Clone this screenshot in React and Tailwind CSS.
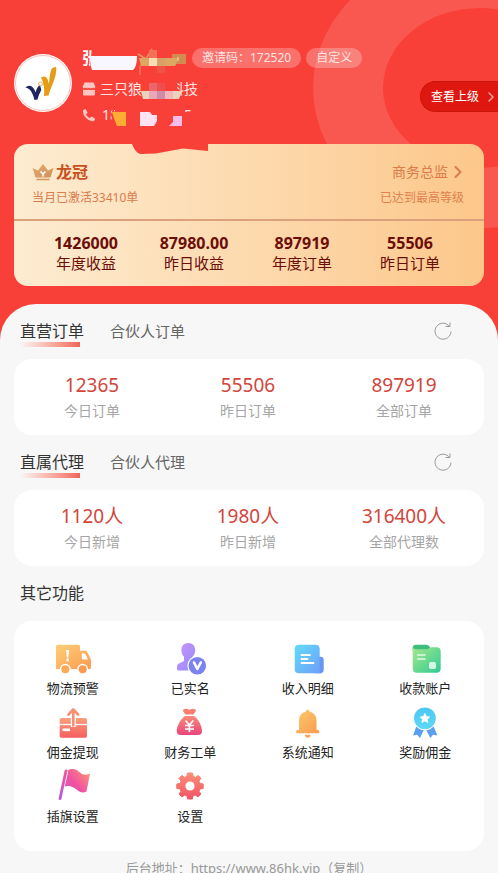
import React, { useState } from "react";
import { ChevronRight } from "lucide-react";

const summary = [
  { value: "1426000", label: "年度收益" },
  { value: "87980.00", label: "昨日收益" },
  { value: "897919", label: "年度订单" },
  { value: "55506", label: "昨日订单" },
];

const orders = [
  { value: "12365", label: "今日订单" },
  { value: "55506", label: "昨日订单" },
  { value: "897919", label: "全部订单" },
];

const agents = [
  { value: "1120人", label: "今日新增" },
  { value: "1980人", label: "昨日新增" },
  { value: "316400人", label: "全部代理数" },
];

// 渐变定义
const Gradient = ({ id, from, to }) => (
  <defs>
    <linearGradient id={id} x1="0" y1="0" x2="1" y2="1">
      <stop offset="0" stopColor={from} />
      <stop offset="1" stopColor={to} />
    </linearGradient>
  </defs>
);

const TruckIcon = () => (
  <svg viewBox="0 0 36 36" className="h-9 w-9">
    <Gradient id="truck" from="#fcd078" to="#fb9a50" />
    <path
      d="M2.500 3.700H23.500Q25 3.700 25 5.500V28H1V5.500Q1 3.700 2.500 3.700ZM25 9.700H30Q31.500 9.700 32.200 11L35.500 17.500Q36 18.500 36 19.500V26.500Q36 28 34.500 28H25Z"
      fill="url(#truck)"
    />
    <path d="M26.800 12.500H29.200Q30 12.500 30.500 13.400L33 18.500H28.500Q26.800 18.500 26.800 17Z" fill="#fff" />
    <circle cx="10.300" cy="28.300" r="5.500" fill="#fff" />
    <circle cx="27.700" cy="28.300" r="5.500" fill="#fff" />
    <circle cx="10.300" cy="28.300" r="4" fill="#fcaa58" />
    <circle cx="27.700" cy="28.300" r="4" fill="#fb9a50" />
    <path d="M11.200 9H14L13.400 16.500H11.800Z" fill="#fff" />
    <circle cx="12.600" cy="19" r="1.400" fill="#fff" />
  </svg>
);

const VerifiedIcon = () => (
  <svg viewBox="0 0 36 36" className="h-9 w-9">
    <Gradient id="person" from="#cf93fb" to="#8a8cf8" />
    <path
      d="M16.300 2C20.800 2 23.200 5 23.200 9C23.200 12 22.300 14 20.500 15.800V19.500L26 23V29.500H6.500Q5 29.500 5 28V25.500Q5 23.500 7 22.500L12 20V15.800C10.200 14 9.400 12 9.400 9C9.400 5 11.800 2 16.300 2Z"
      fill="url(#person)"
    />
    <circle cx="25.300" cy="24.700" r="10" fill="#fff" />
    <circle cx="25.300" cy="24.700" r="8.800" fill="#7a83ee" />
    <path d="M22 21.500L25.300 28L28.800 21.500" fill="none" stroke="#fff" strokeWidth="2.600" strokeLinecap="round" strokeLinejoin="round" />
  </svg>
);

const DetailIcon = () => (
  <svg viewBox="0 0 36 36" className="h-9 w-9">
    <Gradient id="doc" from="#62dcf8" to="#6f9cfb" />
    <path d="M28 15.700H31Q33.700 16 33.700 19V28.500Q33.700 32.300 30 32.300H24Z" fill="#6695f2" />
    <path d="M9 3.700H25.500Q29.700 3.700 29.700 8V28Q29.700 32.300 32 32.300H9Q4.700 32.300 4.700 28V8Q4.700 3.700 9 3.700Z" fill="url(#doc)" />
    <path d="M11.500 14H20M11.500 18H17.500M11.500 22H23.500" stroke="#fff" strokeWidth="1.800" strokeLinecap="round" />
  </svg>
);

const AccountIcon = () => (
  <svg viewBox="0 0 36 36" className="h-9 w-9">
    <Gradient id="folder" from="#a6e88c" to="#2fcb94" />
    <path d="M9 3.700H19Q22 3.700 23 6.500L24 10H5.700V7Q5.700 3.700 9 3.700Z" fill="#3dbd7e" />
    <path d="M5.700 6Q6.500 8.300 9 8.300H18Q21 8.300 22.500 7Q23.500 6.300 25 6.300H29.500Q33.700 6.300 33.700 10.500V27.500Q33.700 31.700 29.500 31.700H10Q5.700 31.700 5.700 27.500Z" fill="url(#folder)" />
    <path d="M10.500 14H18M10.500 18H18" stroke="#fff" strokeOpacity="0.800" strokeWidth="1.500" strokeLinecap="round" />
    <rect x="22" y="21" width="7" height="7" rx="1.800" fill="#d5f7e6" />
  </svg>
);

const WithdrawIcon = () => (
  <svg viewBox="0 0 36 36" className="h-9 w-9">
    <defs>
      <linearGradient id="box" x1="0" y1="0" x2="0" y2="1">
        <stop offset="0" stopColor="#fba07c" />
        <stop offset="1" stopColor="#f65c5e" />
      </linearGradient>
    </defs>
    <path d="M6.500 13H30.500Q32 13 32 14.500V31Q32 32.700 30.500 32.700H6.500Q4.700 32.700 4.700 31V14.500Q4.700 13 6.500 13Z" fill="url(#box)" />
    <path d="M4.700 19.500H32" stroke="#fff" strokeWidth="1.300" />
    <path d="M18.300 22V5M13 10L18.300 4.500L23.600 10" fill="none" stroke="#fff" strokeWidth="5" />
    <path d="M18.300 20.500V5M13.500 9.500L18.300 4.500L23.100 9.500" fill="none" stroke="#f98f72" strokeWidth="2.600" strokeLinecap="round" strokeLinejoin="round" />
    <rect x="7.500" y="23.500" width="7.500" height="2.600" fill="#fff" />
  </svg>
);

const MoneyBagIcon = () => (
  <svg viewBox="0 0 36 36" className="h-9 w-9">
    <defs>
      <linearGradient id="bag" x1="0" y1="0" x2="0" y2="1">
        <stop offset="0" stopColor="#f98a78" />
        <stop offset="1" stopColor="#e8477c" />
      </linearGradient>
    </defs>
    <path d="M11.500 4.500Q14.500 3 17.400 5Q20.300 3 23.300 4.500Q24.500 5.200 23.500 6.500L21.500 9.500H13.300L11.300 6.500Q10.500 5.200 11.500 4.500Z" fill="#f97f70" />
    <path d="M13 11H22C26 14 30 20.500 30 26Q30 30 26 30H8.700Q4.700 30 4.700 26C4.700 20.500 9 14 13 11Z" fill="url(#bag)" />
    <path d="M13.500 15.500L17.400 20L21.300 15.500M17.400 20V27M13 20.500H22M13 24H22" fill="none" stroke="#fff" strokeWidth="1.700" />
  </svg>
);

const BellIcon = () => (
  <svg viewBox="0 0 36 36" className="h-9 w-9">
    <Gradient id="bell" from="#fbcb70" to="#fa9a4c" />
    <path d="M15.800 6.700Q15.800 4.700 17.700 4.700Q19.600 4.700 19.600 6.700C24 7.500 26.500 11 26.500 15.500V25H28Q29.400 25 29.400 26.700Q29.400 28.300 28 28.300H7.400Q6 28.300 6 26.700Q6 25 7.400 25H9V15.500C9 11 11.500 7.500 15.800 6.700Z" fill="url(#bell)" />
    <path d="M14.800 29.800H20.600Q20.200 32.800 17.700 32.800Q15.200 32.800 14.800 29.800Z" fill="#fba458" />
  </svg>
);

const MedalIcon = () => (
  <svg viewBox="0 0 36 36" className="h-9 w-9">
    <defs>
      <linearGradient id="medal" x1="0" y1="0" x2="0" y2="1">
        <stop offset="0" stopColor="#49c8f2" />
        <stop offset="1" stopColor="#60d8f6" />
      </linearGradient>
    </defs>
    <path d="M9.500 21L6 30.500L10.200 29.800L13 33L17 24.500ZM26.500 21L30.300 30.500L26 29.800L23.300 33L19 24.500Z" fill="#5a9ff0" />
    <circle cx="17.900" cy="13.300" r="12" fill="#fff" />
    <circle cx="17.900" cy="13.300" r="10.900" fill="url(#medal)" />
    <path d="M17.900 8.300L19.400 11.500L22.700 12L20.300 14.300L20.900 17.600L17.900 16L14.900 17.600L15.500 14.300L13.100 12L16.400 11.500Z" fill="#fff" stroke="#fff" strokeWidth="0.700" strokeLinejoin="round" />
  </svg>
);

const FlagIcon = () => (
  <svg viewBox="0 0 36 36" className="h-9 w-9">
    <defs>
      <linearGradient id="flag" x1="35" y1="0" x2="5" y2="28" gradientUnits="userSpaceOnUse">
        <stop offset="0" stopColor="#fb9a72" />
        <stop offset="0.500" stopColor="#f252a0" />
        <stop offset="1" stopColor="#b757d8" />
      </linearGradient>
    </defs>
    <path d="M12.500 1.500C18 -2 22 1 25 3.500C28 6 31 6.500 35 4.500L31.500 22.500C28 24.500 25 23.500 21.500 20.500C17.500 17 13 16 8.500 18Z" fill="url(#flag)" />
    <path d="M11.500 2L5 30" stroke="#fff" strokeWidth="3.600" />
    <path d="M11 1.800L5 29.700" stroke="url(#flag)" strokeWidth="2.800" strokeLinecap="round" />
  </svg>
);

const GearIcon = () => (
  <svg viewBox="0 0 36 36" className="h-9 w-9">
    <defs>
      <linearGradient id="gear" x1="0" y1="4" x2="0" y2="30" gradientUnits="userSpaceOnUse">
        <stop offset="0" stopColor="#f98f76" />
        <stop offset="1" stopColor="#f05465" />
      </linearGradient>
    </defs>
    <path
      d="M15.500 4H20.500L21.200 7.400L23.400 8.300L26.300 6.400L29 9.300L27 12.200L27.900 14.300L31.200 15V19.400L27.900 20L27 22.200L28.900 25L26 27.900L23.200 26L21 26.900L20.400 30H15.600L15 26.900L12.800 26L10 27.900L7 25L9 22.200L8.100 20L4.800 19.400V15L8.100 14.300L9 12.200L7 9.300L9.800 6.400L12.700 8.300L14.800 7.400Z"
      fill="url(#gear)"
      stroke="url(#gear)"
      strokeLinejoin="round"
    />
    <circle cx="18" cy="17" r="4.600" fill="#fff" />
  </svg>
);

const features = [
  { label: "物流预警", icon: <TruckIcon /> },
  { label: "已实名", icon: <VerifiedIcon /> },
  { label: "收入明细", icon: <DetailIcon /> },
  { label: "收款账户", icon: <AccountIcon /> },
  { label: "佣金提现", icon: <WithdrawIcon /> },
  { label: "财务工单", icon: <MoneyBagIcon /> },
  { label: "系统通知", icon: <BellIcon /> },
  { label: "奖励佣金", icon: <MedalIcon /> },
  { label: "插旗设置", icon: <FlagIcon /> },
  { label: "设置", icon: <GearIcon /> },
];

const Logo = () => (
  <svg viewBox="0 0 58 58" className="mt-2 h-[58px] w-[58px] shrink-0">
    <circle cx="29" cy="29" r="29" fill="#fff" />
    <circle cx="29" cy="29" r="27.500" fill="none" stroke="#f3a9a5" strokeWidth="0.700" />
    <path d="M11.500 33.500Q13.500 31 17 32Q20.500 34 21.500 38.500Q23 33 26 30.500L27.300 36Q24.500 41 23.500 45.500L20.500 46Q18.500 38 15.500 35.500Q13.800 34.200 11.500 33.500Z" fill="#1f2462" />
    <path d="M27 23.500Q31 21 33.500 25L35 30Q35.500 20 37.500 15Q40 12.500 42.200 13Q42.700 19 39.800 27Q36.500 35 34.500 41.500L30 42Q31 31 27 23.500Z" fill="#e59c17" />
    <circle cx="26.500" cy="30" r="2" fill="none" stroke="#e8b568" strokeWidth="1" />
  </svg>
);

const Crown = () => (
  <svg viewBox="0 0 22 18" className="h-[18px] w-[22px]">
    <Gradient id="crown" from="#e0ab70" to="#d0935a" />
    <path d="M0.500 5L6 7.500L11 1L16 7.500L21.500 5L18.500 14.500H3.500Z" fill="url(#crown)" />
    <path d="M4.500 16.500H17.500" stroke="#d09a5c" strokeWidth="1.500" />
    <path d="M8.500 8.500L11 11L13.500 8.500M11 11V13.500" stroke="#fff" strokeWidth="1.500" fill="none" />
  </svg>
);

// 个人信息遮挡
const PrivacyMask = () => (
  <svg
    viewBox="0 0 132 112"
    className="pointer-events-none absolute left-[78px] top-[45px] z-10 h-[112px] w-[132px]"
    aria-hidden="true"
  >
    <g fill="#f94038">
      <path d="M15 0H60V28H14L12 18Z" />
      <rect x="64" y="34" width="35" height="24" />
      <path d="M36 61L33 69L35 82H128V67H36Z" />
      <rect x="37" y="61" width="67" height="10" />
      <path d="M54 99H130V106L105 103.500L78 108.500L62 109Q57 107 54 99Z" />
    </g>
    <path d="M12 11H59Q59 22 55 25H14Q12 20 12 11Z" fill="#f8f7ff" />
    <path d="M60 9L68 14L74 4" fill="none" stroke="#dd9a60" strokeWidth="1.500" />
    <path d="M62 20V30" stroke="#f08b66" />
    <rect x="71" y="5" width="8" height="8" fill="#f47059" />
    <rect x="79" y="20" width="8" height="8" fill="#ee5346" />
    <path d="M61 13H99V18L97 21H63Z" fill="#dda763" />
    <rect x="71" y="13" width="8" height="8" fill="#f7dcb5" />
    <rect x="79" y="13" width="8" height="8" fill="#d8a064" />
    <path d="M94 9H108V19H99V13H94Z" fill="#d28b50" />
    <path d="M100 12V16" stroke="#ffe0b4" />
    <rect x="71" y="38" width="8" height="8" fill="#e9676a" />
    <rect x="79" y="38" width="8" height="8" fill="#f04d4d" />
    <path d="M63 46H104L101 54H65Z" fill="#ead2bd" />
    <rect x="71" y="46" width="8" height="8" fill="#eba7b5" />
    <rect x="79" y="46" width="8" height="8" fill="#cd8ca8" />
    <rect x="87" y="46" width="8" height="8" fill="#f4b6bb" />
    <path d="M34 67H48V81H39Q36 74 34 67Z" fill="#ffad32" />
    <path d="M62 67H72L74 70H79V76L76 81H62Z" fill="#ffe1f2" />
    <path d="M95 71H104V81H91L95 77Z" fill="#f8bce9" />
  </svg>
);

const RefreshIcon = () => (
  <svg viewBox="0 0 18 18" className="h-[18px] w-[18px]" fill="none" stroke="#999" strokeWidth="1">
    <path d="M15.500 4.500A8 8 0 1 0 17 9.500" />
    <path d="M16 0.500V4.500H11.500" />
  </svg>
);

const StatCard = ({ items }) => (
  <div className="mx-3.5 grid grid-cols-3 rounded-[18px] bg-white pb-[13px] pr-0.5 pt-3.5 text-center">
    {items.map((item) => (
      <div key={item.label}>
        <p className="text-[19px] leading-6 text-[#d2463c]">{item.value}</p>
        <p className="mt-[3px] text-sm leading-[22px] text-[#a6a6a6]">{item.label}</p>
      </div>
    ))}
  </div>
);

const StatSection = ({ tabs, items }) => {
  const [active, setActive] = useState(0);

  return (
    <section>
      <div className="flex h-[55px] items-center pb-0.5 pl-5 pr-[46px]">
        {tabs.map((tab, i) => (
          <button
            key={tab}
            type="button"
            onClick={() => setActive(i)}
            className={
              i === active
                ? "relative mr-[26px] text-base leading-6 text-[#333]"
                : "mr-[26px] text-[15px] leading-6 text-[#666]"
            }
          >
            {i === active && (
              <span className="absolute bottom-[-4px] left-0 h-[5px] w-[60px] bg-linear-to-r from-[#f7f7f7] to-[#ee6558]"></span>
            )}
            <span className="relative">{tab}</span>
          </button>
        ))}
        <button type="button" aria-label="刷新" className="ml-auto">
          <RefreshIcon />
        </button>
      </div>
      <StatCard items={items} />
    </section>
  );
};

const App = () => {
  return (
    <div className="min-h-screen bg-[#f94038] font-['Noto_Sans','Noto_Sans_CJK_SC',sans-serif]">
      <header className="relative overflow-hidden pb-[18px] pt-[46px]">
        {/* 背景圆环 */}
        <svg
          viewBox="0 0 185 228"
          className="absolute right-0 top-0 h-[228px] w-[185px]"
          aria-hidden="true"
        >
          <path
            fillRule="evenodd"
            fill="#f95850"
            d="M0 88A167 140 0 1 1 334 88A167 140 0 1 1 0 88ZM70 88A97 80 0 1 0 264 88A97 80 0 1 0 70 88Z"
          />
        </svg>
        <PrivacyMask />

        <div className="relative flex items-start pl-3.5">
          <Logo />
          <div className="ml-2.5 text-sm text-[#ffe4e2]">
            <div className="flex h-6 items-center">
              <span className="w-[110px] text-base font-bold text-white">张</span>
              <button type="button" className="h-5 whitespace-nowrap rounded-full bg-white/25 px-2.5 text-xs leading-5">
                邀请码：172520
              </button>
              <button type="button" className="ml-[5px] h-5 whitespace-nowrap rounded-full bg-white/25 px-2.5 text-xs leading-5">
                自定义
              </button>
            </div>
            <div className="mt-[7px] flex h-6 items-center">
              <svg viewBox="0 0 14 14" className="mr-1 h-3.5 w-3.5" fill="#ffc5c1">
                <path d="M2.500 0.500H11.500L13.500 5Q12 7 10 5.800Q8.500 7 7 5.800Q5.500 7 4 5.800Q2 7 0.500 5Z" />
                <path d="M1 7.500Q3 8.500 4 7.500Q5.500 8.500 7 7.500Q8.500 8.500 10 7.500Q11.500 8.500 13 7.500V12Q13 13.500 11.500 13.500H2.500Q1 13.500 1 12Z" />
              </svg>
              <span>三只狼</span>
              <span className="ml-7">科技</span>
            </div>
            <div className="mt-0.5 flex h-6 items-center">
              <svg viewBox="0 0 24 24" className="mr-1.5 h-3.5 w-3.5" fill="#ffc5c1">
                <path d="M6.500 2L9.500 8L6.800 10.500C8 13.500 10.500 16 13.500 17.200L16 14.500L22 17.500V20Q21 23 17.500 22.500C9 21 2.500 14.500 1.500 6Q1.500 2.500 4.500 2Z" />
              </svg>
              <span>18</span>
              <span className="ml-[66px]">5</span>
            </div>
          </div>
          <button
            type="button"
            className="ml-auto mt-[35px] flex h-[31px] shrink-0 items-center rounded-l-full border border-r-0 border-[#c9150c] bg-[#de1810] pl-2.5 text-xs text-white"
          >
            查看上级
            <ChevronRight size={16} strokeWidth={2} className="ml-1 -mr-px text-[#f7a7a2]" />
          </button>
        </div>

        <div className="relative mx-3.5 mt-[17px] rounded-[14px] bg-linear-to-r from-[#fdecd1] to-[#fcc78a]">
          <div className="flex justify-between border-b-2 border-[#dba07c] pb-[11px] pl-[18px] pr-5 pt-4">
            <div>
              <h2 className="flex h-6 items-center gap-0.5 text-base font-bold text-[#c8501c]">
                <Crown />
                龙冠
              </h2>
              <p className="mt-1 text-xs leading-5 text-[#d97c4c]">当月已激活33410单</p>
            </div>
            <div className="text-right">
              <a href="#level" className="flex h-6 items-center justify-end text-sm text-[#db7c4a]">
                商务总监
                <ChevronRight size={20} strokeWidth={2.5} className="-mr-1" />
              </a>
              <p className="mt-1 text-xs leading-5 text-[#e0824e]">已达到最高等级</p>
            </div>
          </div>
          <div className="grid grid-cols-4 pb-3 pl-[18px] pr-5 pt-3 text-center text-[#6b0d08]">
            {summary.map((item) => (
              <div key={item.label}>
                <p className="text-base font-bold leading-5">{item.value}</p>
                <p className="text-[15px] leading-[21px]">{item.label}</p>
              </div>
            ))}
          </div>
        </div>
      </header>

      <main className="rounded-t-[36px] bg-[#f7f7f7] pb-3">
        <StatSection tabs={["直营订单", "合伙人订单"]} items={orders} />
        <StatSection tabs={["直属代理", "合伙人代理"]} items={agents} />

        <section>
          <h2 className="flex h-[55px] items-center pb-0.5 pl-5 text-base text-[#333]">其它功能</h2>
          <div className="mx-3.5 grid grid-cols-4 gap-y-[7px] rounded-[18px] bg-white pb-[25px] pt-5">
            {features.map((item) => (
              <button key={item.label} type="button" className="flex flex-col items-center gap-px">
                {item.icon}
                <span className="text-[13px] leading-5 text-[#222]">{item.label}</span>
              </button>
            ))}
          </div>
        </section>

        <footer className="pt-[7px] text-center text-[13px] leading-5 text-[#999]">
          后台地址：https://www.86hk.vip（复制）
        </footer>
      </main>
    </div>
  );
};

export default App;
